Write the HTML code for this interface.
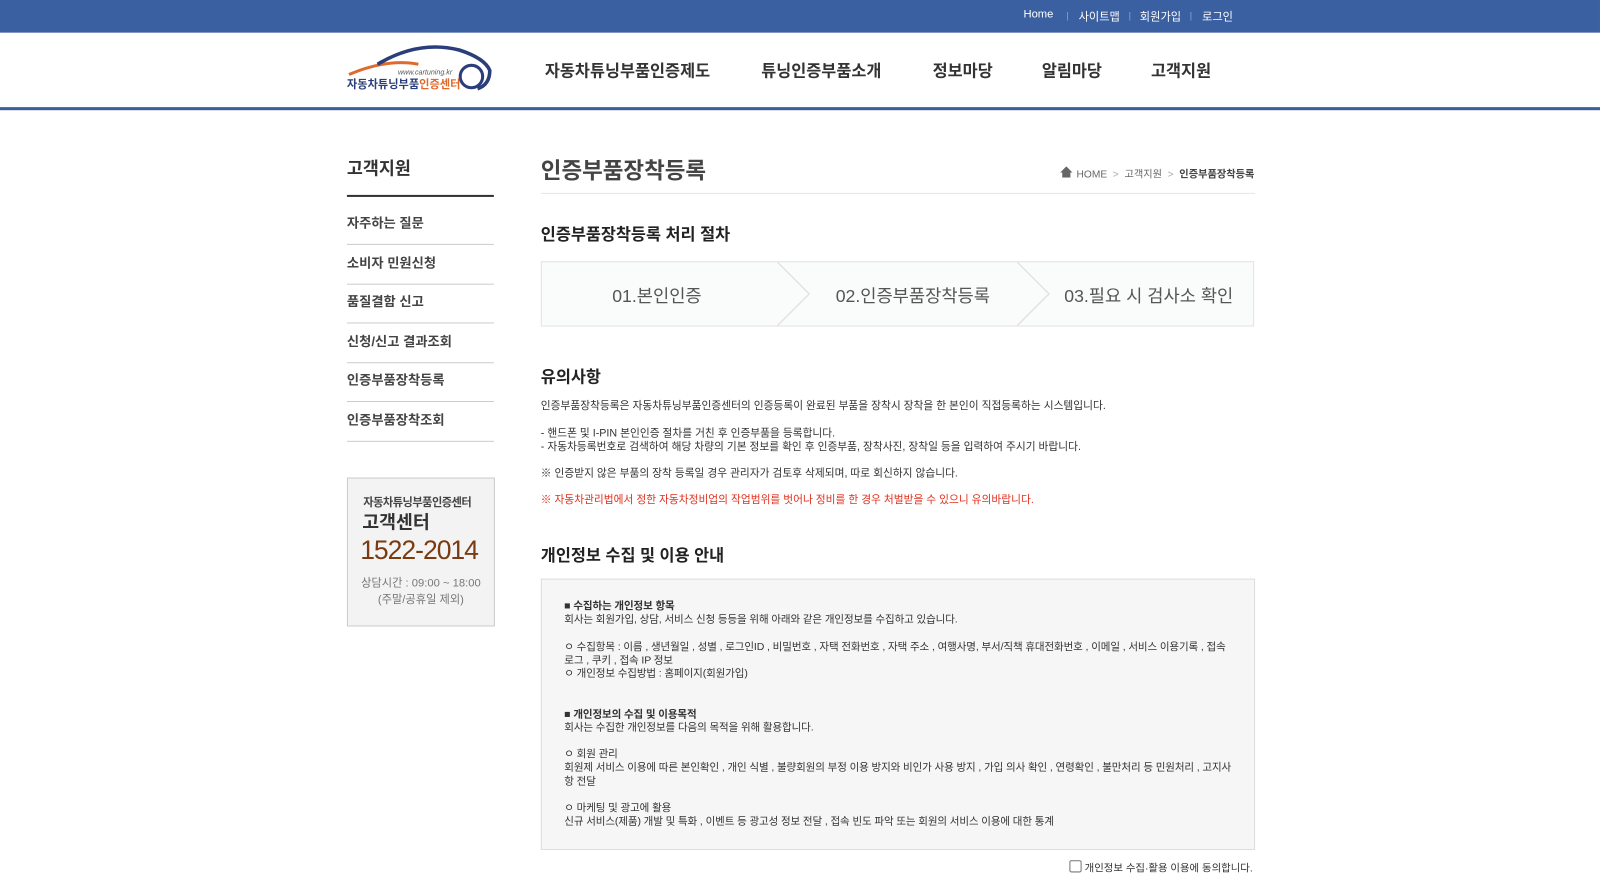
<!DOCTYPE html>
<html><head><meta charset="utf-8"><style>
*{margin:0;padding:0;box-sizing:border-box}
body{width:1600px;height:894px;overflow:hidden;background:#fff;font-family:"Liberation Sans","Noto Sans CJK KR",sans-serif;color:#333;position:relative}
#w{position:absolute;left:0;top:0;width:1568px;height:876px;transform:scale(1.0204);transform-origin:0 0}
.a{position:absolute}
.top{left:0;top:0;width:1568px;height:32px;background:#3b60a1}
.top span{position:absolute;top:8px;color:#fff;font-size:11px}
.hdr{left:0;top:32px;width:1568px;height:76px;border-bottom:3px solid #3b5e9c}
.nav{top:56px;font-size:16px;font-weight:bold;color:#333}
.side{left:340px;width:144px;font-size:13px;font-weight:bold;color:#444;border-bottom:1px solid #ccc;height:39px;line-height:36px}
.t{font-size:10.5px;color:#333;left:530px}
</style></head><body><div id="w">
<div class="a top">
<span style="left:1003px">Home</span><span style="left:1045px;color:#8fa6cf;font-size:9px;top:10px">|</span>
<span style="left:1057px">사이트맵</span><span style="left:1106px;color:#8fa6cf;font-size:9px;top:10px">|</span>
<span style="left:1117px">회원가입</span><span style="left:1166px;color:#8fa6cf;font-size:9px;top:10px">|</span>
<span style="left:1178px">로그인</span>
</div>
<div class="a hdr"></div>
<svg class="a" style="left:340px;top:43px" width="142" height="48">
<path d="M2 30 Q40 14 70 20" stroke="#e06a2c" stroke-width="3" fill="none"/>
<path d="M30 20 Q70 -4 110 6 Q135 14 140 26 Q140 40 128 44" stroke="#2b3d7a" stroke-width="3.5" fill="none"/>
<circle cx="122" cy="32" r="11" stroke="#2b3d7a" stroke-width="3" fill="none"/>
<text x="50" y="30" font-size="7" fill="#555" font-style="italic">www.cartuning.kr</text>
<text x="0" y="43" font-size="11" font-weight="bold" fill="#2b3d7a">자동차튜닝부품<tspan fill="#e06a2c">인증센터</tspan></text>
</svg>
<div class="a nav" style="left:534px">자동차튜닝부품인증제도</div>
<div class="a nav" style="left:746px">튜닝인증부품소개</div>
<div class="a nav" style="left:914px">정보마당</div>
<div class="a nav" style="left:1021px">알림마당</div>
<div class="a nav" style="left:1128px">고객지원</div>

<div class="a" style="left:340px;top:151px;font-size:17px;font-weight:bold;color:#333">고객지원</div>
<div class="a" style="left:340px;top:191px;width:144px;height:2px;background:#333"></div>
<div class="a side" style="top:201px">자주하는 질문</div>
<div class="a side" style="top:240px">소비자 민원신청</div>
<div class="a side" style="top:278px">품질결함 신고</div>
<div class="a side" style="top:317px">신청/신고 결과조회</div>
<div class="a side" style="top:355px">인증부품장착등록</div>
<div class="a side" style="top:394px">인증부품장착조회</div>
<div class="a" style="left:340px;top:468px;width:145px;height:146px;border:1px solid #ccc;background:#f3f3f3">
<div style="position:absolute;left:15px;top:15px;font-size:11px;color:#444;font-weight:bold;letter-spacing:-0.5px">자동차튜닝부품인증센터</div>
<div style="position:absolute;left:14px;top:29px;font-size:18px;color:#333;font-weight:bold">고객센터</div>
<div style="position:absolute;left:12px;top:55px;font-size:26px;color:#7a3b10;letter-spacing:-1px">1522-2014</div>
<div style="position:absolute;left:0;width:143px;text-align:center;top:95px;font-size:11px;color:#777;line-height:16px">상담시간 : 09:00 ~ 18:00<br>(주말/공휴일 제외)</div>
</div>

<div class="a" style="left:530px;top:150px;font-size:22px;font-weight:bold;color:#444">인증부품장착등록</div>
<div class="a" style="left:530px;top:189px;width:700px;height:1px;background:#e5e5e5"></div>
<svg class="a" style="left:1039px;top:163px" width="12" height="11"><path d="M6 0 L12 6 H10 V11 H2 V6 H0Z" fill="#666"/></svg>
<div class="a" style="left:1055px;top:162px;font-size:10px;color:#666">HOME &nbsp;<span style="color:#aaa">&gt;</span>&nbsp; 고객지원 &nbsp;<span style="color:#aaa">&gt;</span>&nbsp; <b style="color:#444">인증부품장착등록</b></div>
<div class="a" style="left:530px;top:216px;font-size:16px;font-weight:bold;color:#222">인증부품장착등록 처리 절차</div>
<div class="a" style="left:530px;top:256px;width:699px;height:64px;border:1px solid #e3e3e3;background:#fafbfb"></div>
<svg class="a" style="left:760px;top:257px" width="280" height="62"><path d="M2 0 L33 31 L2 62 M237 0 L268 31 L237 62" stroke="#e3e3e3" stroke-width="1.5" fill="none"/></svg>
<div class="a" style="left:600px;top:276px;font-size:17.3px;color:#555">01.본인인증</div>
<div class="a" style="left:819px;top:276px;font-size:17.3px;color:#555">02.인증부품장착등록</div>
<div class="a" style="left:1043px;top:276px;font-size:17.3px;color:#555">03.필요 시 검사소 확인</div>

<div class="a" style="left:530px;top:356px;font-size:16px;font-weight:bold;color:#222">유의사항</div>
<div class="a t" style="top:390px">인증부품장착등록은 자동차튜닝부품인증센터의 인증등록이 완료된 부품을 장착시 장착을 한 본인이 직접등록하는 시스템입니다.</div>
<div class="a t" style="top:417px">- 핸드폰 및 I-PIN 본인인증 절차를 거친 후 인증부품을 등록합니다.</div>
<div class="a t" style="top:430px">- 자동차등록번호로 검색하여 해당 차량의 기본 정보를 확인 후 인증부품, 장착사진, 장착일 등을 입력하여 주시기 바랍니다.</div>
<div class="a t" style="top:456px">※ 인증받지 않은 부품의 장착 등록일 경우 관리자가 검토후 삭제되며, 따로 회신하지 않습니다.</div>
<div class="a t" style="top:482px;color:#e0301e">※ 자동차관리법에서 정한 자동차정비업의 작업범위를 벗어나 정비를 한 경우 처벌받을 수 있으니 유의바랍니다.</div>

<div class="a" style="left:530px;top:531px;font-size:16px;font-weight:bold;color:#222">개인정보 수집 및 이용 안내</div>
<div class="a" style="left:530px;top:567px;width:700px;height:266px;border:1px solid #ddd;background:#f6f6f6;padding:20px 22px;font-size:10.3px;line-height:13.2px;color:#333;letter-spacing:-0.1px">
<b>■ 수집하는 개인정보 항목</b><br>회사는 회원가입, 상담, 서비스 신청 등등을 위해 아래와 같은 개인정보를 수집하고 있습니다.<br><br>
ㅇ 수집항목 : 이름 , 생년월일 , 성별 , 로그인ID , 비밀번호 , 자택 전화번호 , 자택 주소 , 여행사명, 부서/직책 휴대전화번호 , 이메일 , 서비스 이용기록 , 접속 로그 , 쿠키 , 접속 IP 정보<br>ㅇ 개인정보 수집방법 : 홈페이지(회원가입)<br><br><br>
<b>■ 개인정보의 수집 및 이용목적</b><br>회사는 수집한 개인정보를 다음의 목적을 위해 활용합니다.<br><br>
ㅇ 회원 관리<br>회원제 서비스 이용에 따른 본인확인 , 개인 식별 , 불량회원의 부정 이용 방지와 비인가 사용 방지 , 가입 의사 확인 , 연령확인 , 불만처리 등 민원처리 , 고지사항 전달<br><br>
ㅇ 마케팅 및 광고에 활용<br>신규 서비스(제품) 개발 및 특화 , 이벤트 등 광고성 정보 전달 , 접속 빈도 파악 또는 회원의 서비스 이용에 대한 통계
</div>
<div class="a" style="left:1048px;top:843px;width:12px;height:12px;border:1px solid #777;border-radius:2px;background:#fff"></div>
<div class="a" style="left:1063px;top:842px;font-size:10.2px;color:#333">개인정보 수집·활용 이용에 동의합니다.</div>
</div></body></html>
